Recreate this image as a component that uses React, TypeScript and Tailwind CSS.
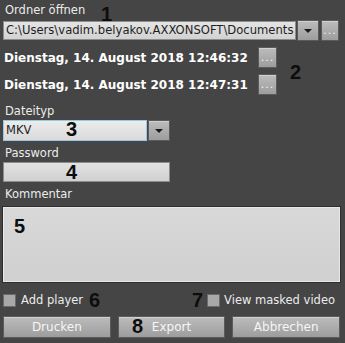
import React from "react";

const Caret = () => (
  <svg width="8" height="4" viewBox="0 0 8 4" className="block">
    <path d="M0 0 H8 L4 4 Z" fill="#1a1a1a" />
  </svg>
);

const Dots = () => <span className="text-[11px] leading-none text-[#f4f4f4] tracking-[1px]">...</span>;

const GrayBtn: React.FC<{ className?: string; children?: React.ReactNode }> = ({ className = "", children }) => (
  <div
    className={`flex items-center justify-center border border-[#5b5b5b] bg-gradient-to-b from-[#bcbcbc] to-[#9d9d9d] shadow-[inset_0_1px_0_#d0d0d0] ${className}`}
  >
    {children}
  </div>
);

const Mark: React.FC<{ n: string; className: string }> = ({ n, className }) => (
  <span className={`absolute font-['Liberation_Sans',sans-serif] font-bold text-[20px] leading-none text-[#0d0d0d] ${className}`}>
    {n}
  </span>
);

export default function App() {
  return (
    <div className="relative w-[345px] h-[343px] overflow-hidden bg-[#454545] font-['DejaVu_Sans',sans-serif] text-[11.5px] text-[#ececec]">
      <div className="flex flex-col px-[3px] pt-[3px]">
        {/* Ordner */}
        <div className="h-[15px] leading-[15px] pl-[2px]">Ordner öffnen</div>
        <div className="mt-[2px] flex items-center">
          <div className="w-[293px] h-[19px] border border-[#8c8c8c] bg-gradient-to-b from-[#e4e4e4] to-[#d2d2d2] pl-[2px] text-[11.6px] leading-[17px] text-[#1e1e1e] whitespace-nowrap overflow-hidden">
            C:\Users\vadim.belyakov.AXXONSOFT\Documents
          </div>
          <GrayBtn className="ml-[1px] w-[22px] h-[21px]">
            <Caret />
          </GrayBtn>
          <GrayBtn className="ml-[2px] w-[18px] h-[21px]">
            <Dots />
          </GrayBtn>
        </div>

        {/* Dates */}
        <div className="mt-[6px] flex items-center h-[21px]">
          <div className="w-[255px] pl-[1px] font-bold text-[12px] text-white whitespace-nowrap">
            Dienstag, 14. August 2018 12:46:32
          </div>
          <GrayBtn className="w-[19px] h-[21px]">
            <Dots />
          </GrayBtn>
        </div>
        <div className="mt-[6px] flex items-center h-[21px]">
          <div className="w-[255px] pl-[1px] font-bold text-[12px] text-white whitespace-nowrap">
            Dienstag, 14. August 2018 12:47:31
          </div>
          <GrayBtn className="w-[19px] h-[21px]">
            <Dots />
          </GrayBtn>
        </div>

        {/* Dateityp */}
        <div className="mt-[9px] h-[15px] leading-[15px] pl-[2px]">Dateityp</div>
        <div className="mt-[1px] flex items-center">
          <div className="w-[144px] h-[21px] border border-[#93cbe6] bg-gradient-to-b from-[#ececec] to-[#dadada] pl-[2px] text-[11.5px] leading-[19px] text-[#1e1e1e]">
            MKV
          </div>
          <GrayBtn className="ml-[1px] w-[22px] h-[21px]">
            <Caret />
          </GrayBtn>
        </div>

        {/* Password */}
        <div className="mt-[5px] h-[15px] leading-[15px] pl-[2px]">Password</div>
        <div className="mt-[1px] w-[167px] h-[20px] border border-[#8c8c8c] bg-gradient-to-b from-[#e2e2e2] to-[#d0d0d0]" />

        {/* Kommentar */}
        <div className="mt-[5px] h-[15px] leading-[15px] pl-[2px]">Kommentar</div>
        <div className="mt-[5px] w-[337px] h-[75px] border border-[#e8e8e8] bg-gradient-to-b from-[#d8d8d8] to-[#d0d0d0] outline outline-1 outline-[#2e2e2e]" />

        {/* Checkboxes */}
        <div className="mt-[11px] flex items-center h-[14px]">
          <div className="w-[13px] h-[13px] border border-[#6a6a6a] bg-[#a8a8a8]" />
          <span className="ml-[5px] leading-[14px]">Add player</span>
          <div className="ml-auto w-[13px] h-[13px] border border-[#6a6a6a] bg-[#a8a8a8]" />
          <span className="ml-[4px] mr-[7px] leading-[14px]">View masked video</span>
        </div>

        {/* Buttons */}
        <div className="mt-[9px] grid grid-cols-3 gap-[7px] pr-[2px]">
          <GrayBtn className="h-[22px] text-[12px] text-[#f6f6f6]">Drucken</GrayBtn>
          <GrayBtn className="h-[22px] text-[12px] text-[#f6f6f6]">Export</GrayBtn>
          <GrayBtn className="h-[22px] text-[12px] text-[#f6f6f6]">Abbrechen</GrayBtn>
        </div>
      </div>

      {/* annotation numbers */}
      <Mark n="1" className="left-[101px] top-[4px]" />
      <Mark n="2" className="left-[290px] top-[62px] text-[17px]" />
      <Mark n="3" className="left-[66px] top-[119px]" />
      <Mark n="4" className="left-[66px] top-[162px]" />
      <Mark n="5" className="left-[14px] top-[216px]" />
      <Mark n="6" className="left-[89px] top-[290px] text-[18px]" />
      <Mark n="7" className="left-[192px] top-[290px]" />
      <Mark n="8" className="left-[132px] top-[316px]" />
    </div>
  );
}
